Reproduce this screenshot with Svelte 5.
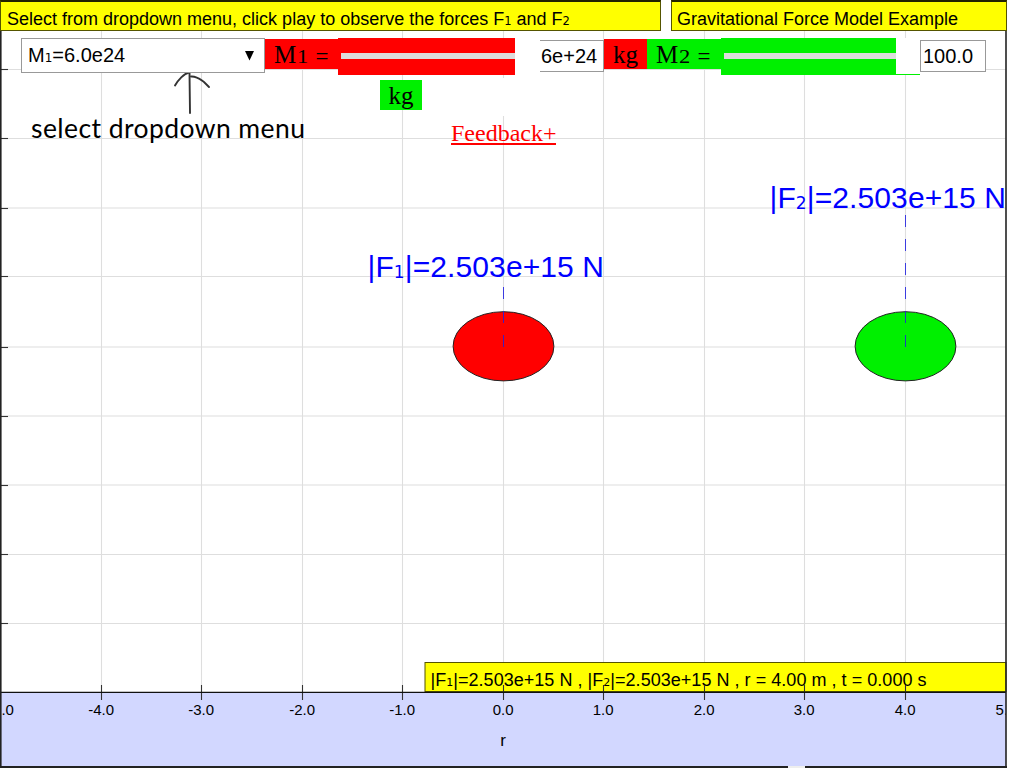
<script>
  const xs = [101.5, 201.5, 302.5, 402.5, 503.5, 603.5, 704.5, 804.5, 905.5];
  const ys = [69.5, 138.5, 208, 276.5, 347, 416, 485, 554.5, 623.5];
  const labels = ['-4.0', '-3.0', '-2.0', '-1.0', '0.0', '1.0', '2.0', '3.0', '4.0'];
  const bodies = [
    { n: 1, cx: 503.5, fill: '#ff0000', tx: 367.5, ty: 277, top: 287 },
    { n: 2, cx: 905.5, fill: '#00f000', tx: 769.5, ty: 208, top: 214 }
  ];
</script>

<main>
  <svg class="plot" width="1024" height="768" viewBox="0 0 1024 768">
    <defs>
      <clipPath id="frame"><rect x="2" y="0" width="1004" height="768" /></clipPath>
    </defs>
    <g class="grid">
      {#each xs as x}<line x1={x} x2={x} y1="31" y2="692" />{/each}
      {#each ys as y}<line x1="1" x2="1006" y1={y} y2={y} />{/each}
    </g>
    <rect x="502" y="78" width="4" height="38" fill="#fff" />
    <rect x="1" y="692" width="1005" height="75" fill="#d2d7ff" />
    {#each bodies as b}
      <ellipse cx={b.cx} cy="346.3" rx="50.4" ry="34.6" fill={b.fill} stroke="#222" />
      <line class="force" x1={b.cx} x2={b.cx} y1="347" y2={b.top} />
    {/each}
    <g clip-path="url(#frame)">
      {#each bodies as b}
        <text class="big" x={b.tx} y={b.ty} textLength="236.5">|F<tspan class="bigsub" dy="1">{b.n}</tspan><tspan dy="-1">|=2.503e+15 N</tspan></text>
      {/each}
    </g>
    <rect x="425" y="662.5" width="581" height="29" fill="#ff0" stroke="#555500" />
    <text class="status" x="430.5" y="686" textLength="496">|F<tspan class="sub">1</tspan>|=2.503e+15 N , |F<tspan class="sub">2</tspan>|=2.503e+15 N , r = 4.00 m , t = 0.000 s</text>
    <g class="axis">
      {#each ys as y}<line x1="1" x2="8" y1={Math.floor(y) + 0.5} y2={Math.floor(y) + 0.5} />{/each}
      {#each xs as x}<line x1={x} x2={x} y1="685" y2="700" />{/each}
    </g>
    <g class="tick" clip-path="url(#frame)">
      {#each xs as x, i}<text x={x - 0.3} y="715">{labels[i]}</text>{/each}
      <text x="1" y="715">-5.0</text>
      <text x="1006" y="715">5.0</text>
    </g>
    <text class="rlabel" x="503" y="746">r</text>
    <path d="M1 692.3H1006" stroke="#111" stroke-width="1.3" />
    <path d="M.8 0V768" stroke="#222" stroke-width="1.6" />
    <path d="M1006 31V768" stroke="#222" stroke-width="1.6" />
    <path d="M0 767H1007" stroke="#222" stroke-width="2" />
    <path d="M788 767H805" stroke="#eee" stroke-width="2" />
    <g fill="none" stroke="#333" stroke-width="1.9" stroke-linecap="round">
      <path d="M190 113L189.500 72.500" />
      <path d="M175 85.500C178 80 184 73.500 189 72.500" />
      <path d="M191 76.500C197 76 201 80 204 82L209 87" />
    </g>
    <text class="note" x="31" y="137.500" textLength="274">select dropdown menu</text>
  </svg>

  <div class="ui">
    <header>
      <div class="panel hint"><span>Select from dropdown menu, click play to observe the forces F<i>1</i> and F<i>2</i></span></div>
      <div class="panel title"><span>Gravitational Force Model Example</span></div>
    </header>
    <div class="controls">
      <div class="select">
        <span>M<i>1</i>=6.0e24</span>
        <svg width="9" height="10" viewBox="0 0 9 10"><path d="M0 0H9L4.500 9.500Z" /></svg>
      </div>
      <div class="label red m1"><span>M<i>1</i> <em>=</em></span></div>
      <div class="slider red s1"><b></b></div>
      <div class="gap g1"></div>
      <div class="field f1">6e+24</div>
      <div class="label red kg">kg</div>
      <div class="label green m2"><span>M<i>2</i> <em>=</em></span></div>
      <div class="slider green s2"><b></b></div>
      <div class="gap g2"></div>
      <div class="field f2">100.0</div>
    </div>
    <div class="second"><div class="label green kg">kg</div></div>
    <div class="feedback"><span>Feedback+</span></div>
  </div>
</main>

<style>
  :global(body) { margin: 0; background: #fff; overflow: hidden; }
  main { position: relative; width: 1024px; height: 768px; overflow: hidden; background: #fff; font-family: "Liberation Sans", Arial, sans-serif; color: #000; }
  .plot { position: absolute; inset: 0; }
  .ui { position: relative; }
  .grid line { stroke: #dedede; stroke-width: 1.1; }
  .axis line { stroke: #333; stroke-width: 1.1; }
  .force { stroke: #2020e0; stroke-opacity: .85; stroke-width: 1; stroke-dasharray: 12 12; }
  .big { font-size: 30px; fill: #00f; }
  .bigsub { font-family: "DejaVu Sans", sans-serif; font-size: 17px; }
  .status { font-size: 18px; }
  .sub { font-family: "DejaVu Sans", sans-serif; font-size: 11px; }
  .tick text { font-size: 15px; text-anchor: middle; }
  .rlabel { font-size: 17px; text-anchor: middle; }
  .note { font-family: Lato, sans-serif; font-size: 26.5px; }
  i, em { font-style: normal; }
  header { display: flex; gap: 10px; height: 31px; }
  .panel { box-sizing: border-box; height: 31px; background: #ff0; border: 1px solid #555500; border-top: 2px solid #222200; padding-left: 6px; font-size: 18px; line-height: 35px; white-space: nowrap; }
  .panel i { font: 11.5px "DejaVu Sans", sans-serif; }
  .hint { width: 661px; }
  .title { width: 336px; padding-left: 5px; }
  .controls { display: flex; align-items: flex-start; height: 42px; padding: 7px 0 0 21px; }
  .controls, .second { box-sizing: border-box; white-space: nowrap; }
  .controls > div { flex: none; box-sizing: border-box; }
  .select { display: flex; justify-content: space-between; align-items: center; width: 244px; height: 35px; border: 1px solid #999; background: #fff; padding: 0 10px 0 6px; font-size: 20px; }
  .select i { font: 12px "DejaVu Sans", sans-serif; }
  .label { height: 30px; margin-top: 1px; font: 25px/32px "Liberation Serif", serif; text-align: center; white-space: nowrap; }
  .label i { font-size: 18px; display: inline-block; line-height: 18px; transform: scaleX(1.25); margin: 0 2px; }
  .label em { font-size: 23px; line-height: 20px; display: inline-block; transform: translateY(1px); }
  .m1, .m2 { text-align: left; padding-left: 9px; }
  .m1 { width: 73px; }
  .m2 { width: 74px; }
  .kg { width: 43px; }
  .red { background: #f00; }
  .green { background: #00f000; }
  .slider { height: 37px; padding: 15px 0 0 3px; }
  .slider b { display: block; height: 6px; background: #ddd; }
  .s1 { width: 177px; }
  .s2 { width: 175px; }
  .gap { background: #fff; height: 37px; }
  .g1 { width: 25px; }
  .g2 { width: 24px; border-bottom: 1px solid #00f000; }
  .field { height: 32px; margin-top: 2px; border: 1px solid #999; background: #fff; font-size: 20px; line-height: 31px; }
  .f1 { width: 64px; border-left: 0; padding-left: 1px; }
  .f2 { width: 66px; padding-left: 2px; }
  .second { padding-left: 380px; height: 43px; padding-top: 6px; }
  .second .kg { width: 42px; }
  .feedback { padding: 2px 0 0 451px; font: 24px/30px "Liberation Serif", serif; color: #f00; }
  .feedback span { display: block; height: 27px; border-bottom: 2px solid #f00; box-sizing: border-box; width: 105px; white-space: nowrap; }
</style>
